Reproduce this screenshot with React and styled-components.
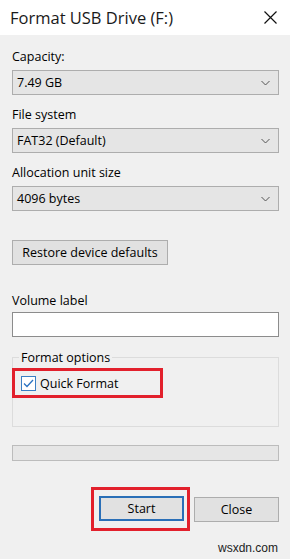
import React from "react";
import styled, { createGlobalStyle } from "styled-components";

const GlobalStyle = createGlobalStyle`
  html, body {
    margin: 0;
    padding: 0;
    background: #f0f0f0;
  }
  body {
    font-family: "Open Sans", "Noto Sans", sans-serif;
    color: #000;
  }
`;

const Window = styled.div`
  width: 290px;
  height: 559px;
  background: #f0f0f0;
  display: flex;
  flex-direction: column;
  overflow: hidden;
`;

const TitleBar = styled.div`
  height: 35px;
  background: #fff;
  display: flex;
  align-items: center;
  justify-content: space-between;
  padding: 0 12px 0 10px;
  box-sizing: border-box;
  flex-shrink: 0;
`;

const Title = styled.h1`
  margin: 0;
  font-size: 16.5px;
  font-weight: 400;
  color: #1a1a1a;
  line-height: 20px;
`;

const CloseX = styled.button`
  border: 0;
  background: none;
  padding: 0;
  width: 14px;
  height: 14px;
  display: flex;
  color: #111;
`;

const Body = styled.div`
  padding: 13px 11px 0 12px;
  display: flex;
  flex-direction: column;
`;

const Field = styled.div`
  display: flex;
  flex-direction: column;
  margin-top: ${(p) => p.$top || 0}px;
`;

const Label = styled.label`
  font-size: 12.5px;
  line-height: 17px;
  height: 17px;
  margin-bottom: ${(p) => p.$gap ?? 5}px;
`;

const Combo = styled.div`
  height: 25px;
  box-sizing: border-box;
  border: 1px solid #adadad;
  background: #e5e5e5;
  display: flex;
  align-items: center;
  justify-content: space-between;
  padding: 0 8px 0 4px;
  font-size: 12.5px;
`;

const Button = styled.button`
  height: 25px;
  width: ${(p) => p.$width || 85}px;
  box-sizing: border-box;
  border: ${(p) => (p.$default ? "2px solid #2a6fb7" : "1px solid #adadad")};
  background: #e1e1e1;
  font-family: inherit;
  font-size: 12.5px;
  color: #000;
  padding: 0;
`;

const RestoreButton = styled(Button)`
  margin-top: 29px;
  align-self: flex-start;
`;

const TextBox = styled.input`
  height: 25px;
  box-sizing: border-box;
  border: 1px solid #8c8c8c;
  background: #fff;
  margin: 0;
`;

const Group = styled.fieldset`
  margin: 12px 0 0;
  padding: 2px 8px 28px 8px;
  border: 1px solid #dcdcdc;
  min-width: 0;
`;

const Legend = styled.legend`
  font-size: 12.5px;
  line-height: 17px;
  padding: 0 2px;
  margin-left: -2px;
`;

const Highlight = styled.div`
  border: 3px solid #e2202c;
  box-sizing: border-box;
`;

const QuickRow = styled(Highlight)`
  height: 30px;
  width: 151px;
  margin-left: -9px;
  padding-left: 6px;
  display: flex;
  align-items: center;
  gap: 4px;
  font-size: 12.5px;
`;

const Check = styled.span`
  width: 15px;
  height: 15px;
  box-sizing: border-box;
  border: 1px solid #3b7fc4;
  background: #fff;
  display: flex;
  align-items: center;
  justify-content: center;
`;

const Progress = styled.div`
  margin-top: 18px;
  height: 16px;
  box-sizing: border-box;
  border: 1px solid #bcbcbc;
  background: #e6e6e6;
`;

const Actions = styled.div`
  margin-top: 26px;
  display: flex;
  justify-content: flex-end;
  align-items: center;
  gap: 4px;
`;

const StartRing = styled(Highlight)`
  padding: 6px 3px 7px 5px;
`;

const Watermark = styled.div`
  margin-top: 9px;
  text-align: right;
  font-family: "Liberation Sans", Arial, sans-serif;
  font-size: 12px;
  line-height: 17px;
  color: #222;
  padding-right: 1px;
`;

const Chevron = () => (
  <svg width="9" height="6" viewBox="0 0 9 6" fill="none">
    <path d="M0.5 1 L4.5 5 L8.5 1" stroke="#555" strokeWidth="1" />
  </svg>
);

const fields = [
  { label: "Capacity:", value: "7.49 GB", top: 0 },
  { label: "File system", value: "FAT32 (Default)", top: 11 },
  { label: "Allocation unit size", value: "4096 bytes", top: 11 },
];

export default function App() {
  return (
    <>
      <GlobalStyle />
      <Window>
        <TitleBar>
          <Title>Format USB Drive (F:)</Title>
          <CloseX aria-label="Close">
            <svg width="13" height="13" viewBox="0 0 13 13">
              <path d="M0.5 0.5 L12.5 12.5 M12.5 0.5 L0.5 12.5" stroke="#111" strokeWidth="1.2" />
            </svg>
          </CloseX>
        </TitleBar>
        <Body>
          {fields.map((f) => (
            <Field key={f.label} $top={f.top}>
              <Label>{f.label}</Label>
              <Combo>
                <span>{f.value}</span>
                <Chevron />
              </Combo>
            </Field>
          ))}
          <RestoreButton $width={156}>Restore device defaults</RestoreButton>
          <Field $top={27}>
            <Label $gap={3}>Volume label</Label>
            <TextBox />
          </Field>
          <Group>
            <Legend>Format options</Legend>
            <QuickRow>
              <Check>
                <svg width="11" height="9" viewBox="0 0 11 9">
                  <path d="M1 4.5 L4 7.5 L10 1" stroke="#2b73c2" strokeWidth="1.3" fill="none" />
                </svg>
              </Check>
              Quick Format
            </QuickRow>
          </Group>
          <Progress />
          <Actions>
            <StartRing>
              <Button $default>Start</Button>
            </StartRing>
            <Button>Close</Button>
          </Actions>
          <Watermark>wsxdn.com</Watermark>
        </Body>
      </Window>
    </>
  );
}
